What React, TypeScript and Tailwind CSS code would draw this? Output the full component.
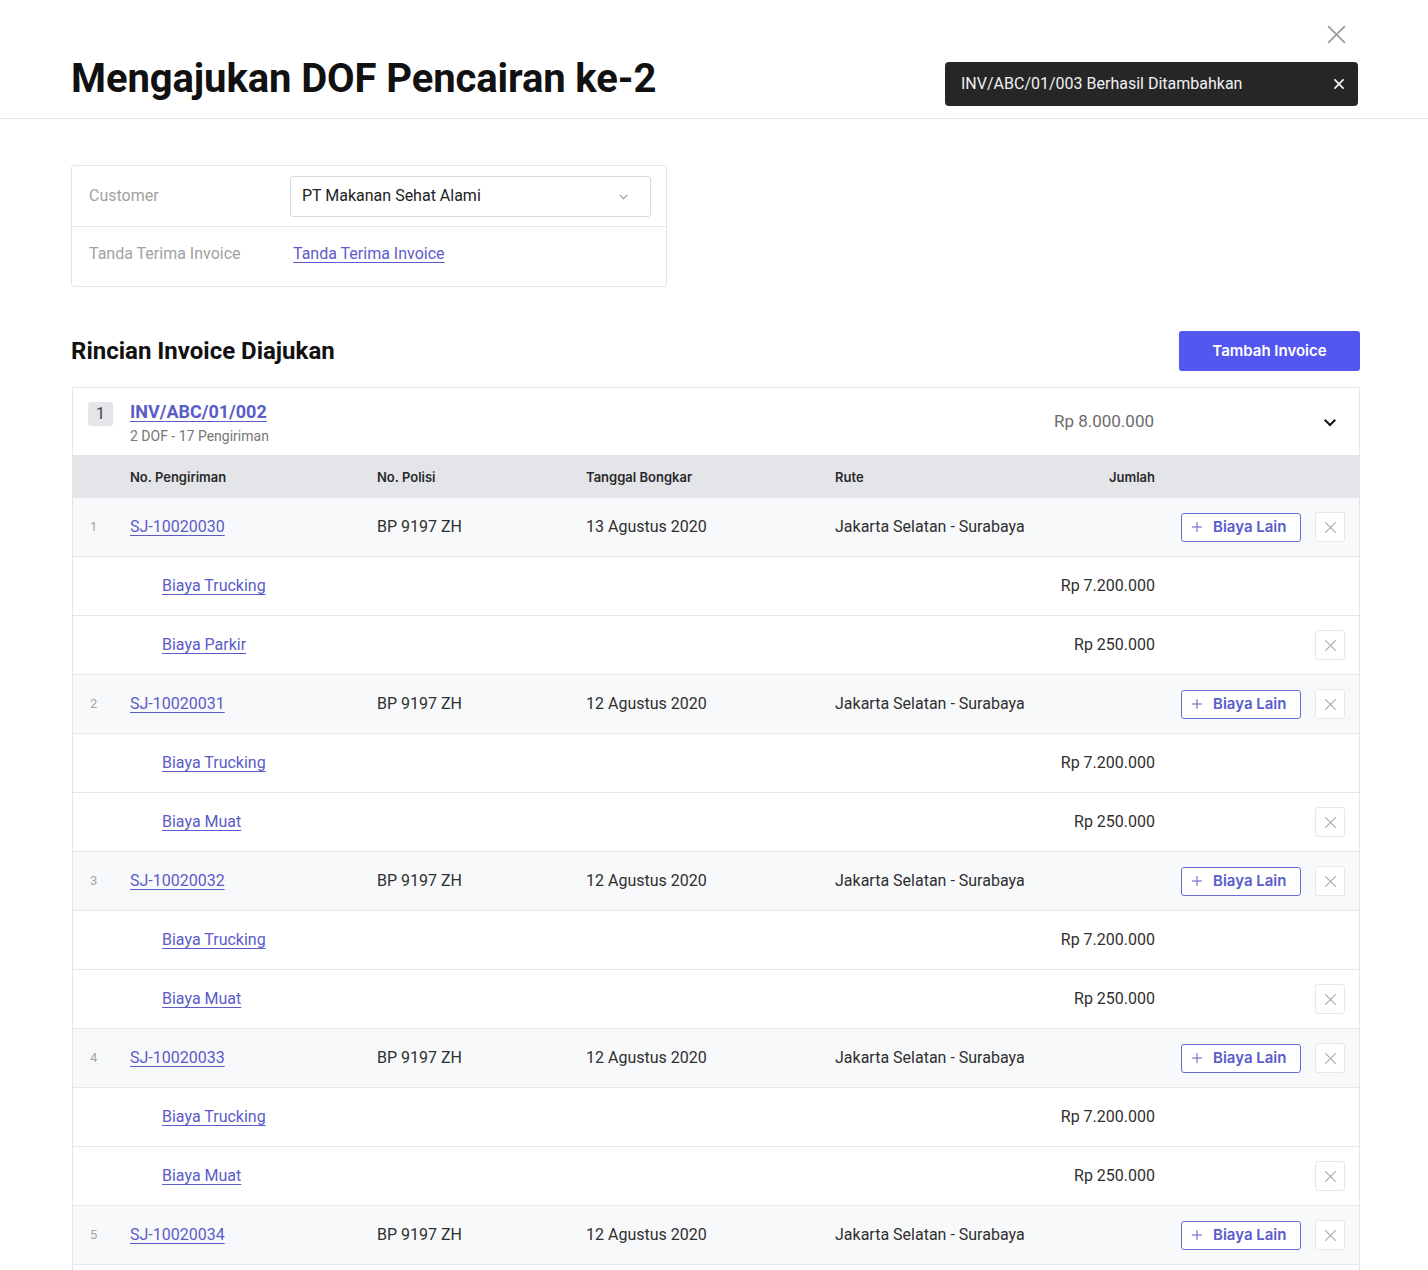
import { Fragment } from 'react';

const font = "font-['Roboto','Liberation_Sans',sans-serif]";
const inter = "font-['Inter','Roboto',sans-serif]";

const cols = 'grid grid-cols-[57px_247px_209px_249px_201px_119px_1fr] items-center';

type Sub = { name: string; amount: string; removable?: boolean };
type Ship = { no: string; polisi: string; tanggal: string; rute: string; subs: Sub[] };

const ships: Ship[] = [
  {
    no: 'SJ-10020030',
    polisi: 'BP 9197 ZH',
    tanggal: '13 Agustus 2020',
    rute: 'Jakarta Selatan - Surabaya',
    subs: [
      { name: 'Biaya Trucking', amount: 'Rp 7.200.000' },
      { name: 'Biaya Parkir', amount: 'Rp 250.000', removable: true },
    ],
  },
  {
    no: 'SJ-10020031',
    polisi: 'BP 9197 ZH',
    tanggal: '12 Agustus 2020',
    rute: 'Jakarta Selatan - Surabaya',
    subs: [
      { name: 'Biaya Trucking', amount: 'Rp 7.200.000' },
      { name: 'Biaya Muat', amount: 'Rp 250.000', removable: true },
    ],
  },
  {
    no: 'SJ-10020032',
    polisi: 'BP 9197 ZH',
    tanggal: '12 Agustus 2020',
    rute: 'Jakarta Selatan - Surabaya',
    subs: [
      { name: 'Biaya Trucking', amount: 'Rp 7.200.000' },
      { name: 'Biaya Muat', amount: 'Rp 250.000', removable: true },
    ],
  },
  {
    no: 'SJ-10020033',
    polisi: 'BP 9197 ZH',
    tanggal: '12 Agustus 2020',
    rute: 'Jakarta Selatan - Surabaya',
    subs: [
      { name: 'Biaya Trucking', amount: 'Rp 7.200.000' },
      { name: 'Biaya Muat', amount: 'Rp 250.000', removable: true },
    ],
  },
  {
    no: 'SJ-10020034',
    polisi: 'BP 9197 ZH',
    tanggal: '12 Agustus 2020',
    rute: 'Jakarta Selatan - Surabaya',
    subs: [
      { name: 'Biaya Trucking', amount: 'Rp 7.200.000' },
      { name: 'Biaya Muat', amount: 'Rp 250.000', removable: true },
    ],
  },
];

function XIcon({ className = '' }: { className?: string }) {
  return (
    <svg className={className} viewBox="0 0 24 24" fill="none" stroke="currentColor" strokeWidth={1.5} strokeLinecap="round">
      <path d="M5 5l14 14M19 5L5 19" />
    </svg>
  );
}

function RemoveBtn() {
  return (
    <button className="w-[30px] h-[30px] flex items-center justify-center rounded-[3px] border border-[#e6e7ea] bg-white text-[#a3a6ad]">
      <XIcon className="w-[17px] h-[17px]" />
    </button>
  );
}

export default function App() {
  return (
    <div className={`${font} bg-white min-h-[1270px] text-[#2b2b2b]`}>
      {/* header */}
      <div className="relative h-[119px] border-b border-[#e4e5e7] px-[71px] flex items-end pb-[17px]">
        <h1 className="text-[40px] font-bold text-[#111] leading-none tracking-[-0.1px] pb-[2px]">
          Mengajukan DOF Pencairan ke-2
        </h1>
        <button className="absolute right-[78px] top-[21px] text-[#9a9a9a]">
          <XIcon className="w-[27px] h-[27px]" />
        </button>
        <div className="absolute right-[70px] top-[62px] w-[413px] h-[44px] rounded-[4px] bg-[#262626] flex items-center justify-between pl-[16px] pr-[12px] text-[#f1f1f1] text-[16px]">
          <span>INV/ABC/01/003 Berhasil Ditambahkan</span>
          <svg className="w-[14px] h-[14px]" viewBox="0 0 24 24" fill="none" stroke="currentColor" strokeWidth={3} strokeLinecap="round">
            <path d="M5 5l14 14M19 5L5 19" />
          </svg>
        </div>
      </div>

      <div className="px-[71px] pt-[46px]">
        {/* customer card */}
        <div className="w-[596px] border border-[#e4e5e7] rounded-[3px]">
          <div className="h-[61px] flex items-center border-b border-[#e4e5e7] pl-[17px] pr-[15px]">
            <div className="w-[201px] text-[16px] text-[#a1a1a1]">Customer</div>
            <div className="flex-1 h-[41px] border border-[#d9dadc] rounded-[3px] flex items-center justify-between pl-[11px] pr-[20px] text-[16px] text-[#222]">
              <span>PT Makanan Sehat Alami</span>
              <svg className="w-[13px] h-[13px] text-[#9a9a9a]" viewBox="0 0 24 24" fill="none" stroke="currentColor" strokeWidth={2}>
                <path d="M5 9l7 7 7-7" />
              </svg>
            </div>
          </div>
          <div className="h-[59px] flex items-center pl-[17px] pb-[6px]">
            <div className="w-[204px] text-[16px] text-[#a1a1a1]">Tanda Terima Invoice</div>
            <a className="text-[16px] text-[#5a5cc9] underline underline-offset-[3px]">Tanda Terima Invoice</a>
          </div>
        </div>

        {/* section title */}
        <div className="mt-[44px] flex items-center justify-between w-[1289px]">
          <h2 className="text-[24px] font-bold text-[#111]">Rincian Invoice Diajukan</h2>
          <button className={`${inter} w-[181px] h-[40px] rounded-[3px] bg-[#5457ef] text-white text-[15px] font-semibold`}>
            Tambah Invoice
          </button>
        </div>

        {/* table */}
        <div className="mt-[16px] ml-[1px] w-[1288px] border border-[#e4e5e7] border-b-0">
          <div className={`${cols} h-[67px]`}>
            <div className="pl-[15px] self-start pt-[14px]">
              <span className="w-[25px] h-[24px] rounded-[3px] bg-[#e4e5e8] flex items-center justify-center text-[16px] text-[#444]">1</span>
            </div>
            <div className="col-span-4 self-start pt-[12px]">
              <a className="block text-[18px] font-bold text-[#5a5cc9] underline underline-offset-[3px] leading-[24px]">INV/ABC/01/002</a>
              <div className="text-[14px] text-[#777] mt-[2px]">2 DOF - 17 Pengiriman</div>
            </div>
            <div className="col-span-2 flex justify-end items-center pr-[20px] text-[17px] text-[#6b6b6b] relative">
              <span className="absolute right-[205px]">Rp 8.000.000</span>
              <svg className="w-[18px] h-[18px] text-[#111]" viewBox="0 0 24 24" fill="none" stroke="currentColor" strokeWidth={2.6}>
                <path d="M5 9l7 7 7-7" />
              </svg>
            </div>
          </div>

          <div className={`${cols} ${inter} h-[43px] pt-[3px] bg-[#e3e5e9] text-[13px] font-semibold text-[#2a2a2a]`}>
            <div />
            <div>No. Pengiriman</div>
            <div>No. Polisi</div>
            <div>Tanggal Bongkar</div>
            <div>Rute</div>
            <div className="text-right">Jumlah</div>
            <div />
          </div>

          {ships.map((s, i) => (
            <Fragment key={s.no}>
              <div className={`${cols} h-[59px] bg-[#f8f9fb] border-b border-[#e6e7e9] text-[16px]`}>
                <div className="pl-[17px] text-[13px] text-[#a5a5a5]">{i + 1}</div>
                <a className="text-[#5a5cc9] underline underline-offset-[3px] justify-self-start">{s.no}</a>
                <div className="text-[#2f2f2f]">{s.polisi}</div>
                <div className="text-[#2f2f2f]">{s.tanggal}</div>
                <div className="text-[#2f2f2f] col-span-2 whitespace-nowrap">{s.rute}</div>
                <div className="flex items-center gap-[14px] pl-[26px]">
                  <button className={`${inter} w-[120px] h-[29px] rounded-[3px] border border-[#6a6cd1] bg-white flex items-center gap-[10px] pl-[9px] text-[15px] font-semibold text-[#5a5cc9]`}>
                    <svg className="w-[12px] h-[12px]" viewBox="0 0 24 24" fill="none" stroke="currentColor" strokeWidth={2}>
                      <path d="M12 2v20M2 12h20" />
                    </svg>
                    Biaya Lain
                  </button>
                  <RemoveBtn />
                </div>
              </div>
              {s.subs.map((sub) => (
                <div key={sub.name} className={`${cols} h-[59px] bg-white border-b border-[#e6e7e9] text-[16px]`}>
                  <div />
                  <div className="col-span-4 pl-[32px]">
                    <a className="text-[#5a5cc9] underline underline-offset-[3px]">{sub.name}</a>
                  </div>
                  <div className="text-right text-[#2f2f2f] whitespace-nowrap">{sub.amount}</div>
                  <div className="flex justify-end pr-[14px]">{sub.removable && <RemoveBtn />}</div>
                </div>
              ))}
            </Fragment>
          ))}
        </div>
      </div>
    </div>
  );
}
